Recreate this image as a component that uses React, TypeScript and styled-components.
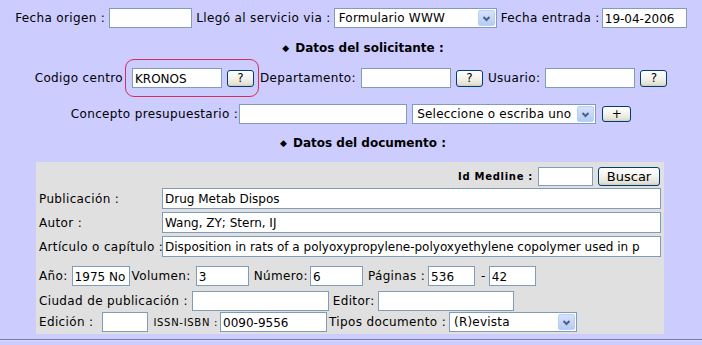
import { createGlobalStyle, styled } from "styled-components";

const GlobalStyle = createGlobalStyle`
  html, body {
    margin: 0;
    padding: 0;
    background: #ccccff;
  }
  body {
    font-family: "DejaVu Sans", Verdana, sans-serif;
    font-size: 12px;
    color: #000;
  }
`;

const Page = styled.div`
  width: 702px;
  height: 345px;
  overflow: hidden;
  box-sizing: border-box;
  padding-top: 8px;
  background: #ccccff;
  display: flex;
  flex-direction: column;
`;

const Row = styled.div<{ $mt?: number; $pl?: number }>`
  display: flex;
  align-items: center;
  justify-content: center;
  height: 20px;
  margin-top: ${(p) => p.$mt ?? 0}px;
  padding-left: ${(p) => p.$pl ?? 0}px;
`;

const Label = styled.span<{ $ml?: number }>`
  white-space: nowrap;
  line-height: 20px;
  letter-spacing: 0.35px;
  margin-left: ${(p) => p.$ml ?? 0}px;
`;

const SmallLabel = styled.span<{ $ml?: number; $bold?: boolean }>`
  white-space: nowrap;
  font-size: 10px;
  letter-spacing: 0.7px;
  font-weight: ${(p) => (p.$bold ? "bold" : "normal")};
  margin-left: ${(p) => p.$ml ?? 0}px;
`;

const TextBox = styled.input<{ $w?: number; $h?: number; $ml?: number }>`
  box-sizing: border-box;
  width: ${(p) => (p.$w ? `${p.$w}px` : "100%")};
  height: ${(p) => p.$h ?? 20}px;
  margin: 0 0 0 ${(p) => p.$ml ?? 0}px;
  padding: 1px 2px 0;
  border: 1px solid #7f9db9;
  border-radius: 0;
  background: #fff;
  font-family: "DejaVu Sans", Verdana, sans-serif;
  font-size: 12px;
  color: #000;
  outline: none;
`;

const XpButton = styled.button<{ $w: number; $h: number; $ml?: number; $fs?: number }>`
  box-sizing: border-box;
  width: ${(p) => p.$w}px;
  height: ${(p) => p.$h}px;
  margin: 0 0 0 ${(p) => p.$ml ?? 0}px;
  padding: 0;
  border: 1px solid #003c74;
  border-radius: 3px;
  background: linear-gradient(#ffffff, #f3f2ec 50%, #e5e2d6 85%, #d2cdbd);
  font-family: "DejaVu Sans", Verdana, sans-serif;
  font-size: ${(p) => p.$fs ?? 12}px;
  line-height: 1;
  color: #000;
`;

const SelectBox = styled.div<{ $w: number; $ml?: number }>`
  box-sizing: border-box;
  width: ${(p) => p.$w}px;
  height: 20px;
  margin-left: ${(p) => p.$ml ?? 0}px;
  display: flex;
  align-items: center;
  border: 1px solid #7f9db9;
  background: #fff;
`;

const SelectText = styled.span`
  flex: 1;
  padding-left: 4px;
  white-space: nowrap;
  overflow: hidden;
  letter-spacing: 0.2px;
`;

const SelectArrow = styled.span`
  box-sizing: border-box;
  width: 17px;
  height: 16px;
  margin-right: 1px;
  display: flex;
  align-items: center;
  justify-content: center;
  border: 1px solid #bacff7;
  border-radius: 2px;
  background: linear-gradient(#d5e2fd, #b7cbf6);
`;

const Select = ({ w, ml, value }: { w: number; ml?: number; value: string }) => (
  <SelectBox $w={w} $ml={ml}>
    <SelectText>{value}</SelectText>
    <SelectArrow>
      <svg width="11" height="11" viewBox="0 0 11 11">
        <polyline
          points="2.5,4 5.5,7 8.5,4"
          fill="none"
          stroke="#4d6185"
          strokeWidth="2"
        />
      </svg>
    </SelectArrow>
  </SelectBox>
);

const Heading = styled.div<{ $mt: number }>`
  display: flex;
  align-items: center;
  justify-content: center;
  padding-left: 24px;
  height: 16px;
  margin-top: ${(p) => p.$mt}px;
  font-weight: bold;
`;

const Diamond = styled.span`
  font-size: 9px;
  margin-right: 6px;
`;

const Highlight = styled.span`
  box-sizing: border-box;
  display: inline-flex;
  align-items: center;
  height: 38px;
  margin: -9px 1px -9px 2px;
  padding: 0 4px 0 6px;
  border: 1px solid #d2305c;
  border-radius: 9px;
`;

const Panel = styled.div`
  box-sizing: border-box;
  width: 628px;
  height: 172px;
  margin: 11px 0 0 36px;
  padding: 4px 3px 0 3px;
  background: #e0e0e0;
  display: flex;
  flex-direction: column;
`;

const PanelRow = styled.div<{ $mt?: number; $right?: boolean }>`
  display: flex;
  align-items: center;
  justify-content: ${(p) => (p.$right ? "flex-end" : "flex-start")};
  height: 20px;
  margin-top: ${(p) => p.$mt ?? 0}px;
  padding-right: ${(p) => (p.$right ? 1 : 0)}px;
`;

const DocGrid = styled.div`
  display: grid;
  grid-template-columns: 123px 1fr;
  grid-auto-rows: 21px;
  row-gap: 3px;
  align-items: center;
  margin-top: 2px;
`;

const Rule = styled.div`
  margin-top: 5px;
  border-top: 1px solid #7b7ba8;
  border-bottom: 1px solid #dcdcff;
`;

export default function App() {
  return (
    <>
      <GlobalStyle />
      <Page>
        <Row>
          <Label>Fecha origen :</Label>
          <TextBox $w={83} $ml={4} />
          <Label $ml={4}>Llegó al servicio via :</Label>
          <Select w={163} ml={3} value="Formulario WWW" />
          <Label $ml={4}>Fecha entrada :</Label>
          <TextBox $w={85} $ml={2} defaultValue="19-04-2006" />
        </Row>

        <Heading $mt={12}>
          <Diamond>◆</Diamond>Datos del solicitante :
        </Heading>

        <Row $mt={12}>
          <Label>Codigo centro</Label>
          <Highlight>
            <TextBox $w={90} defaultValue="KRONOS" />
            <XpButton $w={27} $h={17} $ml={5}>?</XpButton>
          </Highlight>
          <Label>Departamento:</Label>
          <TextBox $w={90} $ml={5} />
          <XpButton $w={27} $h={17} $ml={5}>?</XpButton>
          <Label $ml={5}>Usuario:</Label>
          <TextBox $w={90} $ml={5} />
          <XpButton $w={27} $h={17} $ml={5}>?</XpButton>
        </Row>

        <Row $mt={16}>
          <Label>Concepto presupuestario :</Label>
          <TextBox $w={168} $ml={1} />
          <Select w={184} ml={5} value="Seleccione o escriba uno" />
          <XpButton $w={29} $h={16} $ml={6}>+</XpButton>
        </Row>

        <Heading $mt={11}>
          <Diamond>◆</Diamond>Datos del documento :
        </Heading>

        <Panel>
          <PanelRow $right>
            <SmallLabel $bold>Id Medline :</SmallLabel>
            <TextBox $w={55} $h={19} $ml={5} />
            <XpButton $w={62} $h={19} $ml={5} $fs={13}>Buscar</XpButton>
          </PanelRow>

          <DocGrid>
            <Label>Publicación :</Label>
            <TextBox $h={21} defaultValue="Drug Metab Dispos" />
            <Label>Autor :</Label>
            <TextBox $h={21} defaultValue="Wang, ZY; Stern, IJ" />
            <Label>Artículo o capítulo :</Label>
            <TextBox
              $h={21}
              readOnly
              value="Disposition in rats of a polyoxypropylene-polyoxyethylene copolymer used in p"
            />
          </DocGrid>

          <PanelRow $mt={9}>
            <Label>Año:</Label>
            <TextBox $w={58} $ml={4} defaultValue="1975 No" />
            <Label $ml={2}>Volumen:</Label>
            <TextBox $w={53} $ml={5} defaultValue="3" />
            <Label $ml={5}>Número:</Label>
            <TextBox $w={53} $ml={2} defaultValue="6" />
            <Label $ml={5}>Páginas :</Label>
            <TextBox $w={47} $ml={3} defaultValue="536" />
            <Label $ml={6}>-</Label>
            <TextBox $w={47} $ml={3} defaultValue="42" />
          </PanelRow>

          <PanelRow $mt={5}>
            <Label>Ciudad de publicación :</Label>
            <TextBox $w={137} $ml={4} />
            <Label $ml={4}>Editor:</Label>
            <TextBox $w={136} $ml={3} />
          </PanelRow>

          <PanelRow $mt={1}>
            <Label>Edición :</Label>
            <TextBox $w={46} $ml={9} />
            <SmallLabel $ml={5}>ISSN-ISBN :</SmallLabel>
            <TextBox $w={107} $ml={2} defaultValue="0090-9556" />
            <Label $ml={2}>Tipos documento :</Label>
            <Select w={128} ml={3} value="(R)evista" />
          </PanelRow>
        </Panel>

        <Rule />
      </Page>
    </>
  );
}
